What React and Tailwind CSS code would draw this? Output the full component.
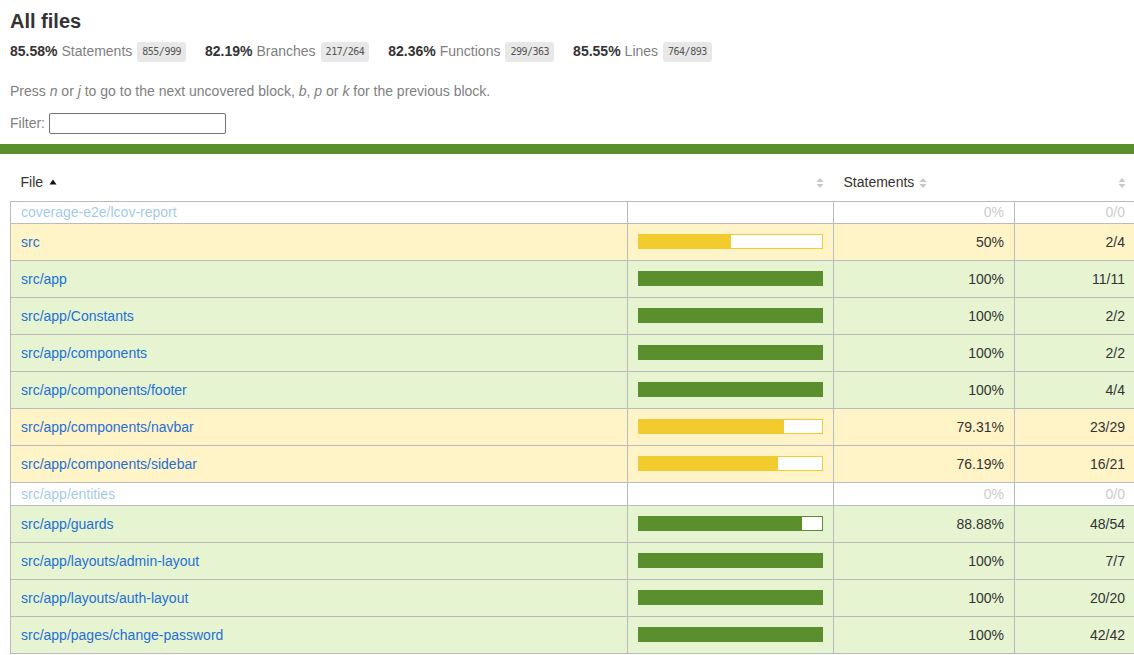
const rows = [
  { file: 'coverage-e2e/lcov-report', pct: 0, num: '0/0', empty: true },
  { file: 'src', pct: 50, label: '50%', num: '2/4', level: 'medium' },
  { file: 'src/app', pct: 100, label: '100%', num: '11/11', level: 'high' },
  { file: 'src/app/Constants', pct: 100, label: '100%', num: '2/2', level: 'high' },
  { file: 'src/app/components', pct: 100, label: '100%', num: '2/2', level: 'high' },
  { file: 'src/app/components/footer', pct: 100, label: '100%', num: '4/4', level: 'high' },
  { file: 'src/app/components/navbar', pct: 79.31, label: '79.31%', num: '23/29', level: 'medium' },
  { file: 'src/app/components/sidebar', pct: 76.19, label: '76.19%', num: '16/21', level: 'medium' },
  { file: 'src/app/entities', pct: 0, num: '0/0', empty: true, tall: true },
  { file: 'src/app/guards', pct: 88.88, label: '88.88%', num: '48/54', level: 'high' },
  { file: 'src/app/layouts/admin-layout', pct: 100, label: '100%', num: '7/7', level: 'high' },
  { file: 'src/app/layouts/auth-layout', pct: 100, label: '100%', num: '20/20', level: 'high' },
  { file: 'src/app/pages/change-password', pct: 100, label: '100%', num: '42/42', level: 'high' },
]

const stats = [
  { pct: '85.58%', name: 'Statements', frac: '855/999' },
  { pct: '82.19%', name: 'Branches', frac: '217/264' },
  { pct: '82.36%', name: 'Functions', frac: '299/363' },
  { pct: '85.55%', name: 'Lines', frac: '764/893' },
]

function Sorter() {
  return (
    <svg width="8" height="12" viewBox="0 0 8 12" className="inline-block align-middle">
      <path d="M4 1 L7.5 5 L0.5 5 Z" fill="#c8c8c8" />
      <path d="M4 11 L7.5 7 L0.5 7 Z" fill="#c8c8c8" />
    </svg>
  )
}

function Bar({ pct, level }) {
  const border = level === 'high' ? 'border-[#5b8e2d]' : 'border-[#f2cc2e]'
  const fill = level === 'high' ? 'bg-[#5b8e2d]' : 'bg-[#f2cc2e]'
  return (
    <div className={`w-[185px] h-[15px] border bg-white ${border}`}>
      <div className={`h-full ${fill}`} style={{ width: pct + '%' }} />
    </div>
  )
}

export default function App() {
  return (
    <div className="w-[1134px] h-[655px] overflow-hidden bg-white text-[14px] text-[#333] font-['Liberation_Sans',Arial,sans-serif]">
      <div className="px-[10px] pt-[9px]">
        <h1 className="text-[20px] leading-[24px] font-bold">All files</h1>
        <div className="flex items-center gap-[19px] mt-[8px]">
          {stats.map((s) => (
            <div key={s.name} className="flex items-center">
              <span className="font-bold">{s.pct}</span>
              <span className="ml-[4px] text-[#7f7f7f]">{s.name}</span>
              <span className="ml-[5px] px-[5px] h-[20px] leading-[20px] rounded-[3px] bg-[#e8e8e8] text-[10px] text-[#555] font-['DejaVu_Sans_Mono',monospace] tracking-[-0.5px]">
                {s.frac}
              </span>
            </div>
          ))}
        </div>
        <p className="mt-[19px] text-[#7f7f7f]">
          Press <em>n</em> or <em>j</em> to go to the next uncovered block, <em>b</em>, <em>p</em> or <em>k</em> for the previous block.
        </p>
        <div className="mt-[11px] flex items-center text-[#7f7f7f]">
          <span>Filter:</span>
          <input type="text" className="ml-[4px] w-[177px] h-[21px] border border-[#767676] rounded-[2px] bg-white" />
        </div>
      </div>
      <div className="mt-[10px] h-[10px] bg-[#5b8e2d]" />
      <div className="pl-[10px] pt-[10px]">
        <table className="border-collapse table-fixed w-[1125px]">
          <colgroup>
            <col className="w-[617px]" />
            <col className="w-[206px]" />
            <col className="w-[181px]" />
            <col className="w-[121px]" />
          </colgroup>
          <thead>
            <tr className="h-[37px]">
              <th className="text-left font-normal px-[10px]">
                File
                <svg width="8" height="6" viewBox="0 0 8 6" className="inline-block ml-[6px] align-middle mb-[2px]">
                  <path d="M4 0.5 L7.5 5.5 L0.5 5.5 Z" fill="#111" />
                </svg>
              </th>
              <th className="text-right px-[10px]">
                <Sorter />
              </th>
              <th className="text-left font-normal px-[10px]">
                Statements <span className="ml-[1px]"><Sorter /></span>
              </th>
              <th className="text-right px-[10px]">
                <Sorter />
              </th>
            </tr>
          </thead>
          <tbody>
            {rows.map((r) => {
              const bg = r.empty ? 'bg-white' : r.level === 'high' ? 'bg-[#e6f4d2]' : 'bg-[#fff4c7]'
              const h = r.empty ? (r.tall ? 'h-[23px]' : 'h-[22px]') : 'h-[37px]'
              return (
                <tr key={r.file} className={`${bg} ${h}`}>
                  <td className="border border-[#bbb] px-[10px] py-0 leading-[20px]">
                    <a className={r.empty ? 'text-[#0074d9]/40' : 'text-[#1f6fd6]'}>{r.file}</a>
                  </td>
                  <td className="border border-[#bbb] px-[10px] py-0">
                    {!r.empty && <Bar pct={r.pct} level={r.level} />}
                  </td>
                  <td className={`border border-[#bbb] px-[10px] py-0 leading-[20px] text-right ${r.empty ? 'text-[#ccc]' : ''}`}>
                    {r.empty ? '0%' : r.label}
                  </td>
                  <td className={`border border-[#bbb] px-[10px] py-0 leading-[20px] text-right ${r.empty ? 'text-[#ccc]' : ''}`}>
                    {r.num}
                  </td>
                </tr>
              )
            })}
          </tbody>
        </table>
      </div>
    </div>
  )
}
